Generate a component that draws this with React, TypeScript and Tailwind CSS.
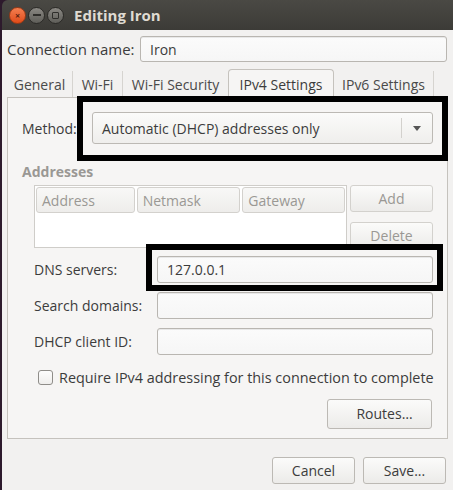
import React from "react";

const font = { fontFamily: '"Open Sans", "Noto Sans", sans-serif' };

function Field({ value, className = "" }: { value?: string; className?: string }) {
  return (
    <div
      className={`flex items-center rounded-[3px] border border-[#b9b6b1] bg-gradient-to-b from-[#fbfbfb] to-[#f6f6f6] px-[9px] text-[14px] text-[#3c3c3c] shadow-[inset_0_1px_0_#e8e8e8] ${className}`}
    >
      {value}
    </div>
  );
}

function Button({ label, dim, className = "" }: { label: string; dim?: boolean; className?: string }) {
  return (
    <div
      className={`flex items-center justify-center rounded-[3px] border border-[#bcb9b4] bg-gradient-to-b from-[#fbfbfa] to-[#ecebe9] text-[14px] ${
        dim ? "text-[#9a9894] border-[#d3d1cd]" : "text-[#3c3c3c]"
      } ${className}`}
    >
      {label}
    </div>
  );
}

function Tab({ label, active, className = "" }: { label: string; active?: boolean; className?: string }) {
  if (active) {
    return (
      <div
        className={`relative -mb-px flex h-[29px] items-center justify-center rounded-t-[4px] border border-b-0 border-[#c5c2bd] bg-[#f6f5f4] text-[14px] text-[#3c3c3c] ${className}`}
      >
        {label}
      </div>
    );
  }
  return (
    <div
      className={`flex h-[26px] items-center justify-center border-r border-[#d6d4d0] text-[14px] text-[#4a4a4a] ${className}`}
    >
      {label}
    </div>
  );
}

function Header({ label, className = "" }: { label: string; className?: string }) {
  return (
    <div
      className={`flex h-[26px] items-center rounded-[3px] border border-[#d3d1cd] bg-gradient-to-b from-[#f8f8f7] to-[#eeedeb] px-[5px] text-[14px] text-[#9a9894] ${className}`}
    >
      {label}
    </div>
  );
}

export default function App() {
  return (
    <div className="flex h-[490px] w-[453px] bg-[#2d1a2c]" style={font}>
      <div className="relative ml-[2px] flex flex-1 flex-col overflow-hidden">
        {/* title bar */}
        <div className="flex h-[30px] items-center rounded-tl-[6px] bg-gradient-to-b from-[#4a4944] to-[#3c3b37] pl-[7px]">
          <div className="flex h-[17px] w-[17px] items-center justify-center rounded-full border border-[#9c3a15] bg-gradient-to-b from-[#f37e4f] to-[#df4a16] text-[9px] font-bold leading-none text-[#5a2210]">
            ×
          </div>
          <div className="ml-[2px] flex h-[17px] w-[17px] items-center justify-center rounded-full border border-[#2b2a27] bg-gradient-to-b from-[#8a8883] to-[#5f5e59]">
            <div className="h-[1.5px] w-[8px] bg-[#2f2e2b]" />
          </div>
          <div className="ml-[2px] flex h-[17px] w-[17px] items-center justify-center rounded-full border border-[#2b2a27] bg-gradient-to-b from-[#8a8883] to-[#5f5e59]">
            <div className="h-[7px] w-[7px] rounded-[1px] border border-[#2f2e2b]" />
          </div>
          <span className="ml-[10px] text-[15px] font-bold text-[#dfdbd2]">Editing Iron</span>
        </div>

        {/* body */}
        <div className="flex flex-1 flex-col bg-[#f2f1f0] px-[5px]">
          <div className="mt-[6px] flex items-center">
            <span className="w-[133px] text-[15px] text-[#3c3c3c]">Connection name:</span>
            <Field value="Iron" className="h-[26px] w-[307px]" />
          </div>

          <div className="mt-[7px] flex items-end border-b border-[#c5c2bd]">
            <Tab label="General" className="w-[66px]" />
            <Tab label="Wi-Fi" className="w-[50px]" />
            <Tab label="Wi-Fi Security" className="w-[105px] border-r-0" />
            <Tab label="IPv4 Settings" active className="w-[106px]" />
            <Tab label="IPv6 Settings" className="w-[100px]" />
          </div>

          <div className="flex h-[341px] w-[441px] flex-col border border-t-0 border-[#c5c2bd] bg-[#f6f5f4] pl-[14px] text-[#3c3c3c]">
            <div className="mt-[14px] flex items-center">
              <span className="w-[70px] text-[14px]">Method:</span>
              <div className="flex h-[32px] w-[341px] items-center rounded-[3px] border border-[#bcb9b4] bg-gradient-to-b from-[#fbfbfa] to-[#efeeec] pl-[9px] text-[14px]">
                <span className="flex-1">Automatic (DHCP) addresses only</span>
                <div className="h-[20px] w-px bg-[#d3d1cd]" />
                <div className="flex w-[30px] justify-center">
                  <div className="h-0 w-0 border-x-[4px] border-t-[5px] border-x-transparent border-t-[#555]" />
                </div>
              </div>
            </div>

            <div className="mt-[17px] text-[14px] font-bold text-[#9a9894]">Addresses</div>

            <div className="mt-[3px] flex pl-[12px]">
              <div className="flex h-[63px] w-[313px] flex-col border border-[#cfcdc9] bg-white p-px">
                <div className="flex gap-[2px]">
                  <Header label="Address" className="w-[99px]" />
                  <Header label="Netmask" className="w-[104px]" />
                  <Header label="Gateway" className="w-[103px]" />
                </div>
              </div>
              <div className="ml-[3px] flex flex-col gap-[10px]">
                <Button label="Add" dim className="h-[27px] w-[83px]" />
                <Button label="Delete" dim className="h-[27px] w-[83px]" />
              </div>
            </div>

            <div className="mt-[7px] flex flex-col gap-[9px] pl-[12px]">
              <div className="flex items-center">
                <span className="w-[123px] text-[14px]">DNS servers:</span>
                <Field value="127.0.0.1" className="h-[27px] w-[276px]" />
              </div>
              <div className="flex items-center">
                <span className="w-[123px] text-[14px]">Search domains:</span>
                <Field className="h-[27px] w-[276px]" />
              </div>
              <div className="flex items-center">
                <span className="w-[123px] text-[14px]">DHCP client ID:</span>
                <Field className="h-[27px] w-[276px]" />
              </div>
            </div>

            <div className="mt-[12px] flex items-center pl-[16px]">
              <div className="h-[15px] w-[15px] rounded-[3px] border border-[#8f8d89] bg-gradient-to-b from-[#fdfdfd] to-[#efeeec]" />
              <span className="ml-[6px] text-[14.4px]">Require IPv4 addressing for this connection to complete</span>
            </div>

            <div className="mt-[10px] flex justify-end pr-[15px]">
              <Button label="Routes…" className="h-[30px] w-[105px] pl-[10px]" />
            </div>
          </div>

          <div className="mt-[18px] flex justify-end gap-[8px] pr-[2px]">
            <Button label="Cancel" className="h-[27px] w-[83px]" />
            <Button label="Save..." className="h-[27px] w-[83px]" />
          </div>
        </div>

        {/* annotation boxes */}
        <div className="absolute left-[75px] top-[96px] h-[65px] w-[371px] border-[6px] border-black" />
        <div className="absolute left-[144px] top-[244px] h-[47px] w-[297px] border-[6px] border-black" />
      </div>
    </div>
  );
}
